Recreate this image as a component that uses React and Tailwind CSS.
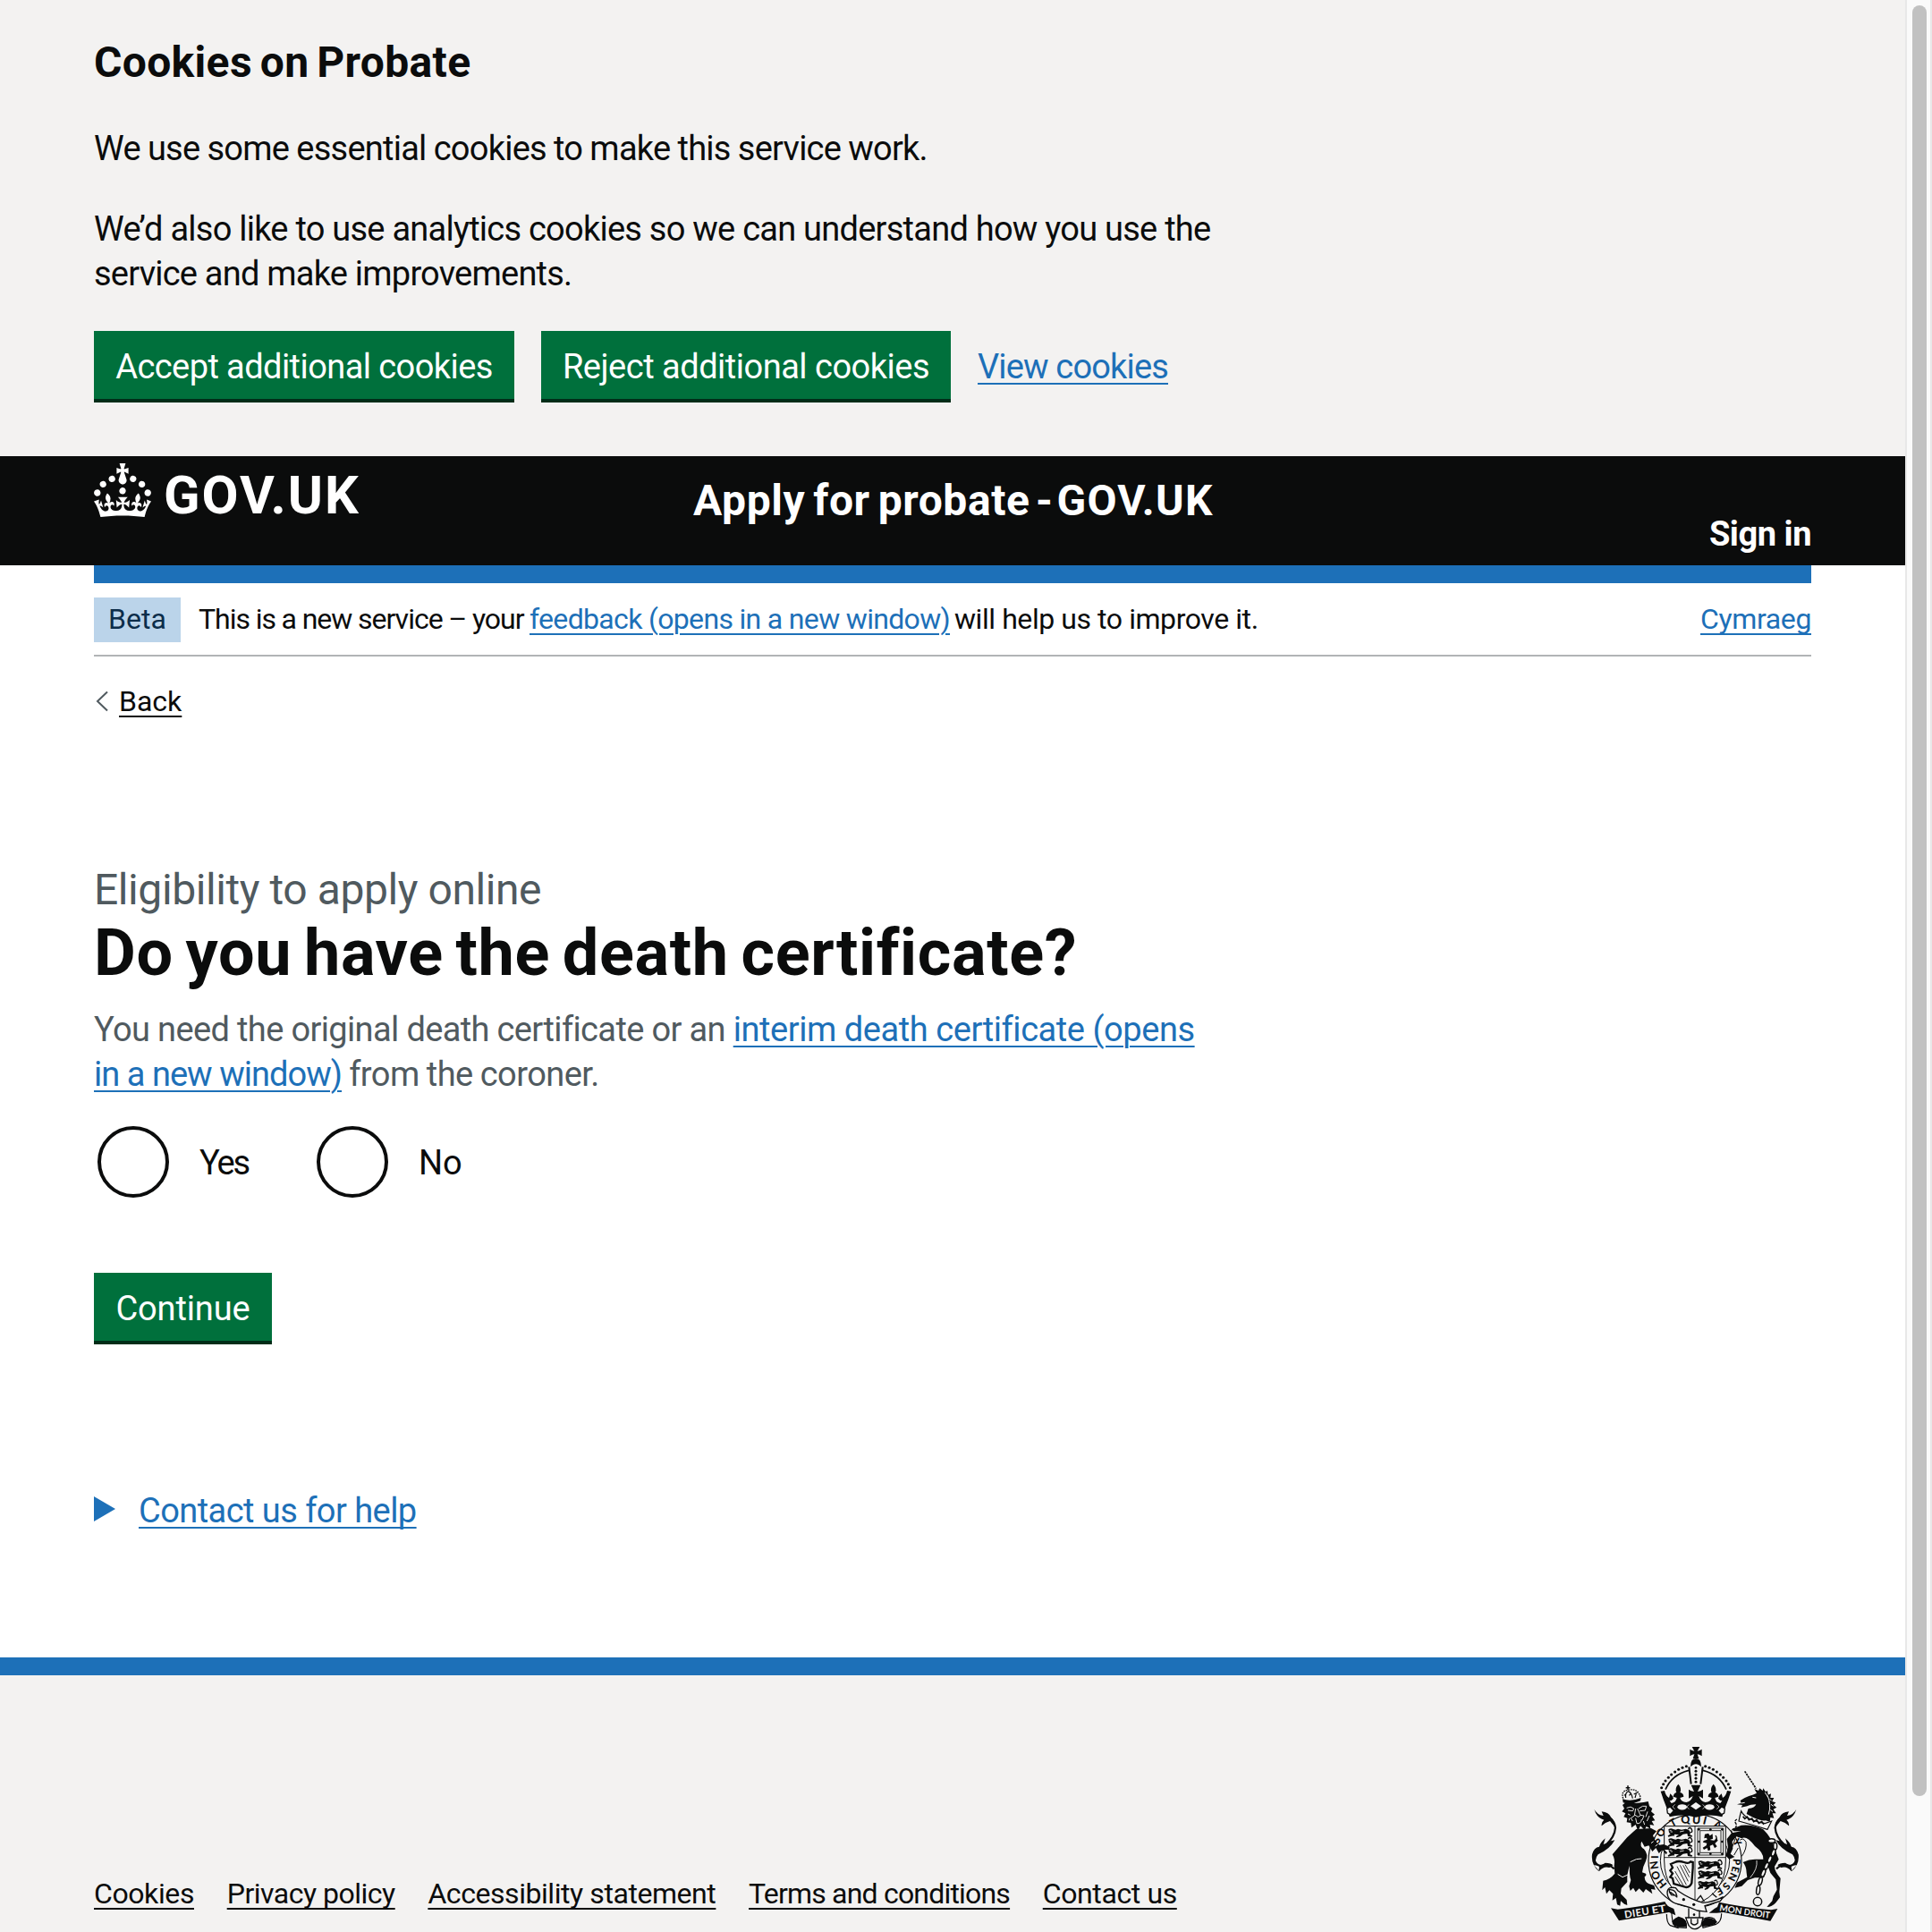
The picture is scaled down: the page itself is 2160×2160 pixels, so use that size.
const INK = "#0b0c0c";
const PAPER = "#f3f2f1";

function Crown() {
  return (
    <svg viewBox="0 0 32 30" className="block h-[60px] w-[64px] shrink-0 fill-white" aria-hidden="true">
      <path d="M22.6 10.4c-1 .4-2-.1-2.4-1-.4-.9.1-2 1-2.4.9-.4 2 .1 2.4 1s-.1 2-1 2.4m-5.9 6.7c-.9.4-2-.1-2.4-1-.4-.9.1-2 1-2.4.9-.4 2 .1 2.4 1s-.1 2-1 2.4m10.8-3.7c-1 .4-2-.1-2.4-1-.4-.9.1-2 1-2.4.9-.4 2 .1 2.4 1s0 2-1 2.4m3.3 4.8c-1 .4-2-.1-2.4-1-.4-.9.1-2 1-2.4.9-.4 2 .1 2.4 1s-.1 2-1 2.4M17 4.7l2.3 1.2V2.5l-2.3.7-.2-.2.9-3h-3.4l.9 3-.2.2c-.1.1-2.3-.7-2.3-.7v3.4L15 4.7c.1.1.1.2.2.2l-1.3 4c-.1.2-.1.4-.1.6 0 1.1.8 2 1.9 2.2h.7c1-.2 1.9-1.1 1.9-2.1 0-.2 0-.4-.1-.6l-1.3-4c-.1-.2 0-.2.1-.3m-7.6 5.7c.9.4 2-.1 2.4-1 .4-.9-.1-2-1-2.4-.9-.4-2 .1-2.4 1s0 2 1 2.4m-5 3c.9.4 2-.1 2.4-1 .4-.9-.1-2-1-2.4-.9-.4-2 .1-2.4 1s.1 2 1 2.4m-3.2 4.8c.9.4 2-.1 2.4-1 .4-.9-.1-2-1-2.4-.9-.4-2 .1-2.4 1s0 2 1 2.4m14.8 11c4.4 0 8.6.3 12.3.8 1.1-4.5 2.4-7 3.7-8.8l-2.5-.9c.2 1.3.3 1.9 0 2.7-.4-.4-.8-1.1-1.1-2.3l-1.2 4c.7-.5 1.3-.8 2-.9-1.1 2.5-2.6 3.1-3.5 3-1.1-.2-1.7-1.2-1.5-2.1.3-1.2 1.5-1.5 2.1-.1 1.1-2.3-.8-3-2-2.3 1.9-1.9 2.1-3.5.6-5.6-2.1 1.6-2.1 3.2-1.2 5.5-1.2-1.4-3.2-.6-2.5 1.6.9-1.4 2.1-.5 1.9.8-.2 1.1-1.7 2.1-3.5 1.9-2.7-.2-2.9-2.1-2.9-3.6.7-.1 1.9.5 2.9 1.9l.4-4.3c-1.1 1.1-2.1 1.4-3.2 1.4.4-1.2 2.1-3 2.1-3h-5.4s1.7 1.9 2.1 3c-1.1 0-2.1-.2-3.2-1.4l.4 4.3c1-1.4 2.2-2 2.9-1.9-.1 1.5-.2 3.4-2.9 3.6-1.9.2-3.4-.8-3.5-1.9-.2-1.3 1-2.2 1.9-.8.7-2.3-1.2-3-2.5-1.6.9-2.2.9-3.9-1.2-5.5-1.5 2-1.3 3.7.6 5.6-1.2-.7-3.1 0-2 2.3.6-1.4 1.8-1.1 2.1.1.2.9-.3 1.9-1.5 2.1-.9.2-2.4-.5-3.5-3 .6 0 1.2.3 2 .9l-1.2-4c-.3 1.1-.7 1.9-1.1 2.3-.3-.8-.2-1.4 0-2.7l-2.9.9C1.3 23 2.6 25.5 3.7 30c3.7-.5 7.9-.8 12.3-.8" />
    </svg>
  );
}

/* One heraldic lion passant, about 84 units wide. */
function Passant({ x, y }) {
  return (
    <g transform={`translate(${x} ${y})`} fill={INK}>
      <path d="M2 4q8 -6 16 -1l8 2 8 -3 12 3 14 -3 10 3 6 9 -2 8 8 3 -1 4 -14 -2 -2 -9 -14 2 -10 8 -12 3 -1 -4 9 -5 -14 -2 -7 5 -14 4 -2 -4 9 -5 -5 -6z" />
      <path d="M68 2q8 -8 12 2t-4 10M6 21q10 4 16 2" fill="none" stroke={INK} strokeWidth="4" />
      <path d="M6 8h6M9 12h7M40 12l14 -3" stroke={PAPER} strokeWidth="2.4" />
    </g>
  );
}

/* Half of the imperial crown; the other half is mirrored about x = 408. */
function CrownHalf() {
  return (
    <g>
      <g fill={INK}>
        <circle cx="376" cy="134" r="4.6" />
        <circle cx="363" cy="139" r="4.6" />
        <circle cx="350" cy="145" r="4.6" />
        <circle cx="338" cy="153" r="4.6" />
        <circle cx="326" cy="162" r="4.6" />
        <circle cx="316" cy="172" r="4.6" />
        <circle cx="306" cy="183" r="4.6" />
        <circle cx="299" cy="194" r="4.6" />
        <circle cx="293" cy="206" r="4.6" />
      </g>
      <path d="M384 148Q328 162 306 212" fill="none" stroke={INK} strokeWidth="5" />
      <path d="M385 136L392 194" stroke={INK} strokeWidth="6" />
      <path
        d="M290 218L303 216Q307 234 318 240L322 226Q330 232 333 242Q327 250 320 250L326 258Q341 256 344 240L332 236Q334 224 343 222Q336 208 349 194Q362 208 355 222Q366 224 367 236L355 240Q358 254 376 255Q392 252 398 234L384 242V212Q392 218 402 219L392 197H408V305Q360 292 320 304L311 276Q298 244 290 218Z"
        fill={INK}
      />
      <ellipse cx="362" cy="271" rx="16" ry="9.5" fill={PAPER} />
      <path d="M338 262L330 270L338 278M385 262L378 270L385 278" fill="none" stroke={PAPER} strokeWidth="2" />
      <path d="M311 276L322 270L334 283L322 296L313 291Z" fill={PAPER} stroke={INK} strokeWidth="4" />
    </g>
  );
}

function Tail() {
  return (
    <g>
      <path
        d="M134 478Q110 456 92 470Q66 466 64 432Q72 410 108 396Q136 370 138 340Q134 310 106 302"
        fill="none"
        stroke={INK}
        strokeWidth="6.5"
      />
      <path
        d="M67 278Q76 296 98 300L92 286Q116 288 124 306Q136 316 138 340L120 318Q104 322 92 334Q90 322 100 314Q76 308 67 278ZM136 382Q118 384 106 394L98 396L104 376Q86 392 84 404Q66 406 60 430Q56 462 82 486L84 470Q62 452 80 430Q120 412 136 382ZM66 466Q90 468 104 458Q124 458 130 466L118 474Q98 468 84 486Z"
        fill={INK}
      />
    </g>
  );
}

function CoatOfArms() {
  return (
    <svg viewBox="45 60 720 630" className="mt-[77px] mr-[10px] block h-[210px] w-[240px] shrink-0" aria-label="Royal coat of arms">
      {/* garter */}
      <circle cx="405" cy="451" r="156" fill={PAPER} stroke={INK} strokeWidth="3.5" />
      <circle cx="405" cy="451" r="116" fill="none" stroke={INK} strokeWidth="3" />
      <g fill={INK} fontFamily="Lato, sans-serif" fontWeight="900">
        <text transform="translate(312 530) rotate(-128)" fontSize="36">H</text>
        <text transform="translate(291 508) rotate(-115)" fontSize="36">O</text>
        <text transform="translate(283 478) rotate(-98)" fontSize="36">N</text>
        <text transform="translate(281 444) rotate(-90)" fontSize="36">I</text>
        <text transform="translate(284 396) rotate(-70)" fontSize="34">S</text>
        <text transform="translate(293 374) rotate(-58)" fontSize="34">O</text>
        <text transform="translate(328 338) rotate(-28)" fontSize="34">T</text>
        <text transform="translate(360 328) rotate(-9)" fontSize="37">Q</text>
        <text transform="translate(395 326) rotate(4)" fontSize="37">U</text>
        <text transform="translate(430 327) rotate(14)" fontSize="37">I</text>
        <text transform="translate(466 336) rotate(26)" fontSize="34">A</text>
        <text transform="translate(530 386) rotate(58)" fontSize="34">Y</text>
        <text transform="translate(533 444) rotate(92)" fontSize="34">P</text>
        <text transform="translate(531 468) rotate(103)" fontSize="34">E</text>
        <text transform="translate(526 488) rotate(115)" fontSize="34">N</text>
        <text transform="translate(508 521) rotate(132)" fontSize="34">S</text>
        <text transform="translate(490 538) rotate(150)" fontSize="34">E</text>
      </g>

      {/* shield */}
      <path d="M302 335H508V450Q508 560 405 598Q302 560 302 450Z" fill={PAPER} stroke={INK} strokeWidth="3" />
      <path d="M405 335V598M302 440H508" stroke={INK} strokeWidth="2.6" />
      <Passant x="314" y="342" />
      <Passant x="314" y="375" />
      <Passant x="314" y="408" />
      <Passant x="414" y="450" />
      <Passant x="414" y="483" />
      <g transform="translate(414 518) scale(.82 1)">
        <Passant x="0" y="0" />
      </g>
      <path d="M414 342H500V432H414ZM422 350H492V424H422Z" fill="none" stroke={INK} strokeWidth="2.6" />
      <g fill={INK}>
        <circle cx="418" cy="346" r="4" />
        <circle cx="457" cy="346" r="4" />
        <circle cx="496" cy="346" r="4" />
        <circle cx="418" cy="387" r="4" />
        <circle cx="496" cy="387" r="4" />
        <circle cx="418" cy="428" r="4" />
        <circle cx="457" cy="428" r="4" />
        <circle cx="496" cy="428" r="4" />
      </g>
      <path d="M438 362l12 -3 5 8 9 -6 1 16 -10 4 14 2 8 -8 5 8 -10 10 7 10 -8 6 -6 -12 -10 4 2 14 -8 3 -3 -10 -11 6 -4 -7 12 -7 2 -8 -13 -3 2 -5 12 -4 -2 -6 -8 2z" fill={INK} />
      <path d="M474 366q8 12 -2 20" fill="none" stroke={INK} strokeWidth="4" />

      {/* harp */}
      <path d="M334 528L330 510L322 506L330 494L322 484L330 474L324 462L338 456Q350 450 368 456Q384 462 390 454L398 456V474L394 526Q388 540 376 540Z" fill={PAPER} stroke={INK} strokeWidth="7" />
      <path d="M345 470L376 532M355 466L382 520M365 466L386 506M338 486L366 534M372 464L388 492M338 504L356 532" stroke={INK} strokeWidth="2.5" />

      {/* crown */}
      <CrownHalf />
      <g transform="matrix(-1 0 0 1 816 0)">
        <CrownHalf />
      </g>
      <path d="M395 69H421L413 83Q422 82 428 77V100Q420 94 413 94L418 108H398L403 94Q396 94 388 100V77Q394 82 403 83Z" fill={INK} />
      <path d="M390 136Q390 108 408 108Q426 108 426 136L418 130Q408 124 398 130Z" fill={INK} />
      <g fill={INK}>
        <circle cx="408" cy="139" r="4" />
        <circle cx="408" cy="151" r="4.4" />
        <circle cx="408" cy="163" r="4.4" />
        <circle cx="408" cy="175" r="4.4" />
        <circle cx="408" cy="187" r="4.4" />
      </g>
      <path d="M390 268L408 255L426 268L408 280Z" fill={PAPER} />

      {/* lion supporter */}
      <Tail />
      <path
        d="M208 345L178 372L128 430Q138 446 134 468L136 494Q120 514 97 518L94 550L103 540L108 562L118 550L130 562L128 584L140 576L144 598L154 602L156 586L168 596L178 600L176 582L156 562L158 544L178 522Q176 494 186 468Q184 500 190 516L184 536L188 552L198 542L206 556L218 544L232 558L240 546L262 562L258 546L272 548L268 534L250 528Q236 522 236 504Q244 500 240 494L228 490Q230 470 240 452Q250 430 234 412Q218 402 226 386L236 404L250 400L262 420L274 408L284 426L296 414L308 430L312 424L302 414L318 414L320 404L300 396L286 398Q270 386 264 366L276 352L258 342Z"
        fill={INK}
      />
      <path d="M188 455Q210 442 226 444M146 496L162 506L180 498M258 392L266 386M272 402L280 396" fill="none" stroke={PAPER} strokeWidth="3" />
      <path
        d="M172 256Q198 262 248 252L252 268L262 276L258 286L270 296L262 302L271 316L260 318L268 332L254 330L256 344L242 336L236 348L222 334L214 352L206 330L192 340L190 324L176 322L178 308L166 304L172 292L160 286L168 276L162 264Z"
        fill={INK}
      />
      <path
        d="M176 274Q190 266 200 276L196 284L180 282M216 276Q230 264 242 268L238 282L220 284M206 276L202 300L190 308L196 318M212 276L222 298L234 300L228 314M204 298L214 304L224 298M206 308L210 326Q224 328 226 312M180 294L188 298M246 286L240 304M252 300L244 318M186 308L184 316M232 318L236 330"
        fill="none"
        stroke={PAPER}
        strokeWidth="2.8"
      />
      <path d="M164 256Q190 266 222 250L224 240Q190 254 162 244Z" fill={INK} />
      <path d="M164 242Q156 216 180 214Q214 206 222 238" fill="none" stroke={INK} strokeWidth="4" strokeDasharray="5 3" />
      <path d="M173 240Q170 224 181 218Q192 222 196 242M204 240L208 226M168 232L174 226M184 232L190 226M200 228L212 222" fill="none" stroke={INK} strokeWidth="3.5" />
      <path d="M180 199V214M173 206H187" stroke={INK} strokeWidth="4.5" />

      {/* unicorn supporter */}
      <g transform="matrix(-1 0 0 1 812 0)">
        <Tail />
      </g>
      <path d="M572 151L610 209" stroke={INK} strokeWidth="5" strokeDasharray="7 2.5" />
      <path
        d="M546 262L560 258L557 249L572 240L586 234Q602 230 612 224L604 210L618 216L622 208L632 216L634 208L642 220L648 216L650 230L660 226L658 240L670 240L664 252L676 256L668 264L679 272L668 278L677 292L665 292L670 308L658 306L656 320L642 316Q618 318 578 294L584 276Q606 274 610 262Q590 262 580 268L560 272L564 264Z"
        fill={INK}
      />
      <path d="M598 238L610 240M648 232Q662 262 652 296M640 222L650 238M656 244L662 250M660 262L668 268M658 280L666 286M560 258L572 256" fill="none" stroke={PAPER} strokeWidth="3" />
      <path d="M560 284Q574 314 640 326L662 318L648 346Q596 330 552 318L556 300Z" fill={PAPER} stroke={INK} strokeWidth="3.5" />
      <path d="M566 302l6 8 8 -6 6 10 10 -5 6 11 10 -6 7 11 10 -5 7 9" fill="none" stroke={INK} strokeWidth="5" />
      <path d="M546 312q-10 4 -4 14t-6 18q-12 4 -8 14" fill="none" stroke={INK} strokeWidth="4" strokeDasharray="9 3" />
      <path
        d="M560 332Q600 328 634 346Q660 372 668 400L686 446L672 470Q672 486 692 510L688 556L690 574L676 592Q664 606 646 606L664 586L668 570L680 548L676 514L658 492L650 470L636 508L606 508L582 516L562 536L538 542L546 524L580 506L578 492Q578 470 566 456Q586 446 606 446L634 446Q636 424 606 402Q578 366 562 376L544 370L530 386L532 410L524 428L538 438L520 446L508 434L516 408L512 378L528 358L560 352L534 352L530 344Z"
        fill={INK}
      />
      <path d="M556 382Q566 372 576 388Q580 410 562 436M528 410L540 378M536 432L550 408" fill="none" stroke={INK} strokeWidth="3" />
      <path d="M590 508Q616 478 612 450M640 474L646 496" fill="none" stroke={PAPER} strokeWidth="2.5" />
      <g fill={PAPER} stroke={INK} strokeWidth="4.5">
        <ellipse cx="662" cy="384" rx="12" ry="7" />
        <ellipse cx="674" cy="402" rx="6" ry="12" />
        <ellipse cx="668" cy="424" rx="6" ry="12" transform="rotate(18 668 424)" />
        <ellipse cx="656" cy="446" rx="6" ry="12" transform="rotate(24 656 446)" />
        <ellipse cx="645" cy="468" rx="6" ry="12" transform="rotate(24 645 468)" />
        <ellipse cx="634" cy="492" rx="6" ry="13" transform="rotate(22 634 492)" />
        <ellipse cx="624" cy="520" rx="6" ry="14" transform="rotate(16 624 520)" />
        <ellipse cx="617" cy="550" rx="6" ry="15" transform="rotate(6 617 550)" />
        <circle cx="615" cy="588" r="14" />
      </g>

      {/* motto ribbon */}
      <path d="M123 610L146 614Q230 604 304 588L312 602L334 612L340 634L318 624L150 652Z" fill={INK} />
      <path d="M682 612L660 616Q560 606 486 590L480 606L470 612L452 626L478 626L500 624L658 653Z" fill={INK} />
      <path d="M308 598Q328 616 328 640Q330 668 344 674L376 676Q380 648 350 640Q334 648 332 662M310 630Q310 660 322 668L350 677M494 628Q494 656 476 664L432 676L428 650Q450 634 470 646Q480 656 466 668" fill="none" stroke={INK} strokeWidth="3.5" />
      <path d="M328 654Q340 638 360 642Q380 648 376 672Q346 678 330 664ZM428 672Q426 648 446 642Q468 644 480 656Q470 670 428 672Z" fill={INK} />
      <g fill={PAPER} fontFamily="Lato, sans-serif" fontWeight="700" fontSize="34">
        <text transform="translate(170 644) rotate(-9)" textLength="84">DIEU</text>
        <text transform="translate(262 629) rotate(-9)" textLength="48" lengthAdjust="spacingAndGlyphs">ET</text>
        <text transform="translate(486 619) rotate(9)" textLength="76" lengthAdjust="spacingAndGlyphs" fontSize="30">MON</text>
        <text transform="translate(568 632) rotate(8)" textLength="88" lengthAdjust="spacingAndGlyphs" fontSize="30">DROIT</text>
      </g>

      {/* buckle and strap */}
      <path d="M340 542Q312 536 312 558Q314 592 356 598Q388 606 412 618L444 622L438 602L490 586L500 572Q466 590 432 592Q388 580 348 552Z" fill={PAPER} stroke={INK} strokeWidth="4" />
      <path d="M318 548Q340 546 344 568L326 566Q318 556 318 548ZM322 556L346 574" fill="none" stroke={INK} strokeWidth="4" />
      <circle cx="367" cy="581" r="5" fill={INK} />
      <circle cx="401" cy="598" r="5" fill={INK} />
      <path d="M410 584L424 568L436 588M462 560L478 574" fill="none" stroke={INK} strokeWidth="4" />
      <path d="M384 610V642M420 620V642M374 642H432L426 668Q402 692 384 668Z" fill={PAPER} stroke={INK} strokeWidth="4" />
      <path d="M392 646V660Q402 672 414 660V646" fill="none" stroke={INK} strokeWidth="4" />
      <circle cx="402" cy="632" r="4" fill={INK} />
    </svg>
  );
}

function GreenButton({ children, className }) {
  return (
    <button
      className={`flex h-[76px] items-center justify-center bg-[#00703c] pt-[4px] text-[38px] leading-[50px] whitespace-nowrap text-white shadow-[0_4px_0_#002d18] ${className}`}
    >
      {children}
    </button>
  );
}

function Link({ children, className = "" }) {
  return (
    <a className={`text-[#1d70b8] underline decoration-2 underline-offset-[5px] ${className}`}>{children}</a>
  );
}

function FooterLink({ children, className }) {
  return (
    <a className={`underline decoration-2 underline-offset-[5px] ${className}`}>{children}</a>
  );
}

function Radio({ label, className }) {
  return (
    <label className={`flex items-center text-[38px] leading-[80px] ${className}`}>
      <span className="size-[80px] shrink-0 rounded-full border-4 border-[#0b0c0c]" />
      <span className="pt-[2px]">{label}</span>
    </label>
  );
}

export default function App() {
  return (
    <div className="flex h-[2160px] w-[2160px] overflow-hidden bg-white font-['Roboto',sans-serif] text-[#0b0c0c]">
      <div className="flex w-[2130px] shrink-0 flex-col">
        <section className="h-[510px] shrink-0 bg-[#f3f2f1] px-[105px] pt-[40px]">
          <h2 className="mb-[41px] text-[48px] leading-[60px] font-bold tracking-[0.007em] [word-spacing:-0.07em]">Cookies on Probate</h2>
          <div className="text-[38px] leading-[50px] whitespace-nowrap">
            <p className="mb-[40px] tracking-[-0.0200em] [word-spacing:-0.014em]">We use some essential cookies to make this service work.</p>
            <p className="tracking-[-0.0199em]">We’d also like to use analytics cookies so we can understand how you use the</p>
            <p className="mb-[39px] tracking-[-0.0205em]">service and make improvements.</p>
          </div>
          <div className="flex gap-[30px]">
            <GreenButton className="w-[470px] tracking-[-0.0150em]">Accept additional cookies</GreenButton>
            <GreenButton className="w-[458px] tracking-[-0.0130em]">Reject additional cookies</GreenButton>
            <Link className="pt-[15px] text-[38px] leading-[50px] tracking-[-0.0221em]">View cookies</Link>
          </div>
        </section>

        <header className="h-[122px] shrink-0 bg-[#0b0c0c] px-[105px] text-white">
          <div className="flex h-[122px] items-start">
            <div className="flex w-[670px] gap-[14px] pt-[8px]">
              <Crown />
              <span className="pt-[6px] text-[59.5px] leading-[60px] font-bold tracking-[0.034em]">GOV.UK</span>
            </div>
            <span className="pt-[20px] text-[48px] leading-[60px] font-bold tracking-[0.012em] whitespace-nowrap [word-spacing:-0.075em]">
              Apply for probate<span className="tracking-[-0.038em]"> - </span>
              <span className="tracking-[0.026em]">GOV.UK</span>
            </span>
            <a className="ml-auto pt-[62px] text-[38px] leading-[50px] font-bold tracking-[-0.012em]">Sign in</a>
          </div>
        </header>

        <main className="flex flex-col px-[105px]">
          <div className="h-[20px] bg-[#1d70b8]" />
          <div className="flex h-[82px] border-b-2 border-[#b1b4b6] pt-[16px] text-[32px] leading-[48px] whitespace-nowrap">
            <strong className="mr-[20px] flex h-[50px] w-[97px] justify-center bg-[#bbd4ea] font-normal text-[#0c2d4a]">Beta</strong>
            <span className="w-[370px] tracking-[-0.0310em] [word-spacing:-0.01em]">This is a new service – your</span>
            <Link className="w-[470px] tracking-[-0.0211em]">feedback (opens in a new window)</Link>
            <span className="pl-[5px] tracking-[-0.0135em]">will help us to improve it.</span>
            <Link className="ml-auto tracking-[-0.0116em] [text-decoration-skip-ink:none]">Cymraeg</Link>
          </div>

          <a className="mt-[30px] flex h-[40px] items-center text-[32px] leading-[40px]">
            <svg viewBox="0 0 14 24" className="mr-[12px] ml-[2px] h-[24px] w-[14px]" fill="none" stroke="#505a5f" strokeWidth="2">
              <path d="M13 1.5L2 12L13 22.5" />
            </svg>
            <span className="underline decoration-2 underline-offset-[5px]">Back</span>
          </a>

          <span className="mt-[161px] text-[48px] leading-[60px] tracking-[-0.0088em] text-[#505a5f]">Eligibility to apply online</span>
          <h1 className="mt-[3px] text-[72px] leading-[75px] font-bold tracking-[0.0090em] [word-spacing:-0.066em]">Do you have the death certificate?</h1>
          <p className="mt-[23px] text-[38px] leading-[50px] whitespace-nowrap text-[#505a5f]">
            <span className="tracking-[-0.0168em]">You need the original death certificate or an </span>
            <Link className="tracking-[-0.0116em]">interim death certificate (opens</Link>
            <br />
            <Link className="tracking-[-0.0255em]">in a new window)</Link>
            <span className="tracking-[-0.0145em] [word-spacing:-0.02em]"> from the coroner.</span>
          </p>

          <div className="mt-[33px] flex h-[80px] items-start pl-[4px]">
            <Radio label="Yes" className="h-[80px] w-[245px] gap-[34px] tracking-[-0.055em]" />
            <Radio label="No" className="h-[80px] gap-[34px]" />
          </div>

          <GreenButton className="mt-[84px] w-[199px] tracking-[-0.003em]">Continue</GreenButton>

          <div className="mt-[165px] flex h-[49px] items-start text-[38px] leading-[50px]">
            <svg viewBox="0 0 24 28" className="mt-[9px] mr-[26px] h-[28px] w-[24px] fill-[#1d70b8]">
              <path d="M0 0L24 14L0 28Z" />
            </svg>
            <Link className="tracking-[-0.0145em] [text-decoration-skip-ink:none]">Contact us for help</Link>
          </div>
        </main>

        <footer className="mt-[140px] flex h-[307px] shrink-0 justify-between border-t-[20px] border-[#1d70b8] bg-[#f3f2f1] px-[105px]">
          <nav className="flex gap-[36.7px] pt-[224px] text-[32px] leading-[40px] whitespace-nowrap [text-decoration-skip-ink:none]">
            <FooterLink className="tracking-[-0.0126em]">Cookies</FooterLink>
            <FooterLink className="tracking-[-0.0156em]">Privacy policy</FooterLink>
            <FooterLink className="tracking-[-0.0136em]">Accessibility statement</FooterLink>
            <FooterLink className="tracking-[-0.0252em]">Terms and conditions</FooterLink>
            <FooterLink className="tracking-[-0.0123em]">Contact us</FooterLink>
          </nav>
          <CoatOfArms />
        </footer>
      </div>

      <div className="flex w-[30px] shrink-0 justify-center border-r-2 border-l-2 border-[#e8e8e8] bg-[#fafafa] pt-[6px] pl-[2px]">
        <div className="h-[2002px] w-[16px] rounded-full bg-[#c1c1c1]" />
      </div>
    </div>
  );
}
